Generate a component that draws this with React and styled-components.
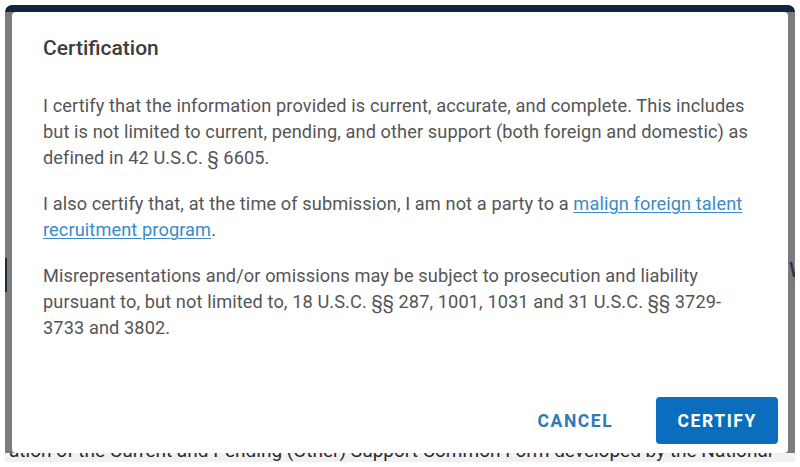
import React from "react";
import styled, { createGlobalStyle } from "styled-components";

const GlobalStyle = createGlobalStyle`
  html, body {
    margin: 0;
    padding: 0;
    background: #ffffff;
  }
  * {
    box-sizing: border-box;
  }
`;

const Page = styled.div`
  width: 800px;
  height: 467px;
  padding: 5px;
  overflow: hidden;
  font-family: Roboto, "Liberation Sans", sans-serif;
`;

const Frame = styled.div`
  height: 457px;
  display: flex;
  flex-direction: column;
  border-radius: 7px 7px 0 0;
  overflow: hidden;
`;

const TopBar = styled.div`
  height: 7px;
  flex: none;
  background: #14263e;
`;

const Middle = styled.div`
  flex: 1;
  display: flex;
  background: #7b7b7b;
  min-height: 0;
`;

const Edge = styled.div`
  width: 7px;
  flex: none;
  overflow: hidden;
  position: relative;

  .mark {
    position: absolute;
    top: ${(p) => p.$markTop}px;
    left: ${(p) => p.$markLeft}px;
  }
`;

const LeftMark = styled.div`
  width: 2px;
  height: 34px;
  background: #222a33;
`;

const RightMark = styled.div`
  font-size: 21px;
  line-height: 1;
  color: #1f3656;
  font-weight: 500;
`;

const Dialog = styled.div`
  flex: 1;
  display: flex;
  flex-direction: column;
  background: #ffffff;
  border-radius: 4px;
  padding: 24px 10px 9px 31px;
`;

const Title = styled.h2`
  margin: 0;
  font-size: 21px;
  line-height: 25px;
  font-weight: 500;
  color: #3c3c3c;
`;

const Body = styled.div`
  margin-top: 32px;
  padding-right: 21px;
`;

const Para = styled.p`
  margin: 0 0 20px;
  font-size: 18.2px;
  letter-spacing: 0.1px;
  line-height: 26px;
  color: #555555;
`;

const Link = styled.a`
  color: #3a8bcb;
  text-decoration: underline;
  text-underline-offset: 2px;
  text-decoration-thickness: 1px;
`;

const Footer = styled.div`
  margin-top: auto;
  display: flex;
  justify-content: flex-end;
  align-items: center;
  gap: 22px;
`;

const Button = styled.button`
  height: 47px;
  padding: 0 21px;
  border: none;
  border-radius: 4px;
  background: ${(p) => (p.$primary ? "#0a6dbd" : "transparent")};
  color: ${(p) => (p.$primary ? "#ffffff" : "#2e7ab6")};
  font-family: Roboto, "Liberation Sans", sans-serif;
  font-size: 17.5px;
  font-weight: 700;
  letter-spacing: 1.6px;
  text-transform: uppercase;
  cursor: pointer;
`;

const BottomStrip = styled.div`
  height: 9px;
  flex: none;
  overflow: hidden;
  background: #f1f1f1;
  white-space: nowrap;
  padding-left: 4px;

  span {
    display: block;
    margin-top: -12px;
    font-size: 19px;
    line-height: 20px;
    color: #2a2a2a;
    font-weight: 400;
  }
`;

const App = () => {
  return (
    <Page>
      <GlobalStyle />
      <Frame>
        <TopBar />
        <Middle>
          <Edge $markTop={246} $markLeft={0}>
            <LeftMark className="mark" />
          </Edge>
          <Dialog role="dialog" aria-labelledby="cert-title">
            <Title id="cert-title">Certification</Title>
            <Body>
              <Para>
                I certify that the information provided is current, accurate, and complete. This includes
                but is not limited to current, pending, and other support (both foreign and domestic) as
                defined in 42 U.S.C. § 6605.
              </Para>
              <Para>
                I also certify that, at the time of submission, I am not a party to a{" "}
                <Link href="#">malign foreign talent recruitment program</Link>.
              </Para>
              <Para>
                Misrepresentations and/or omissions may be subject to prosecution and liability pursuant
                to, but not limited to, 18 U.S.C. §§ 287, 1001, 1031 and 31 U.S.C. §§ 3729-3733 and 3802.
              </Para>
            </Body>
            <Footer>
              <Button>Cancel</Button>
              <Button $primary>Certify</Button>
            </Footer>
          </Dialog>
          <Edge $markTop={248} $markLeft={1}>
            <RightMark className="mark">W</RightMark>
          </Edge>
        </Middle>
        <BottomStrip>
          <span>
            ation of the Current and Pending (Other) Support Common Form developed by the National
          </span>
        </BottomStrip>
      </Frame>
    </Page>
  );
};

export default App;
